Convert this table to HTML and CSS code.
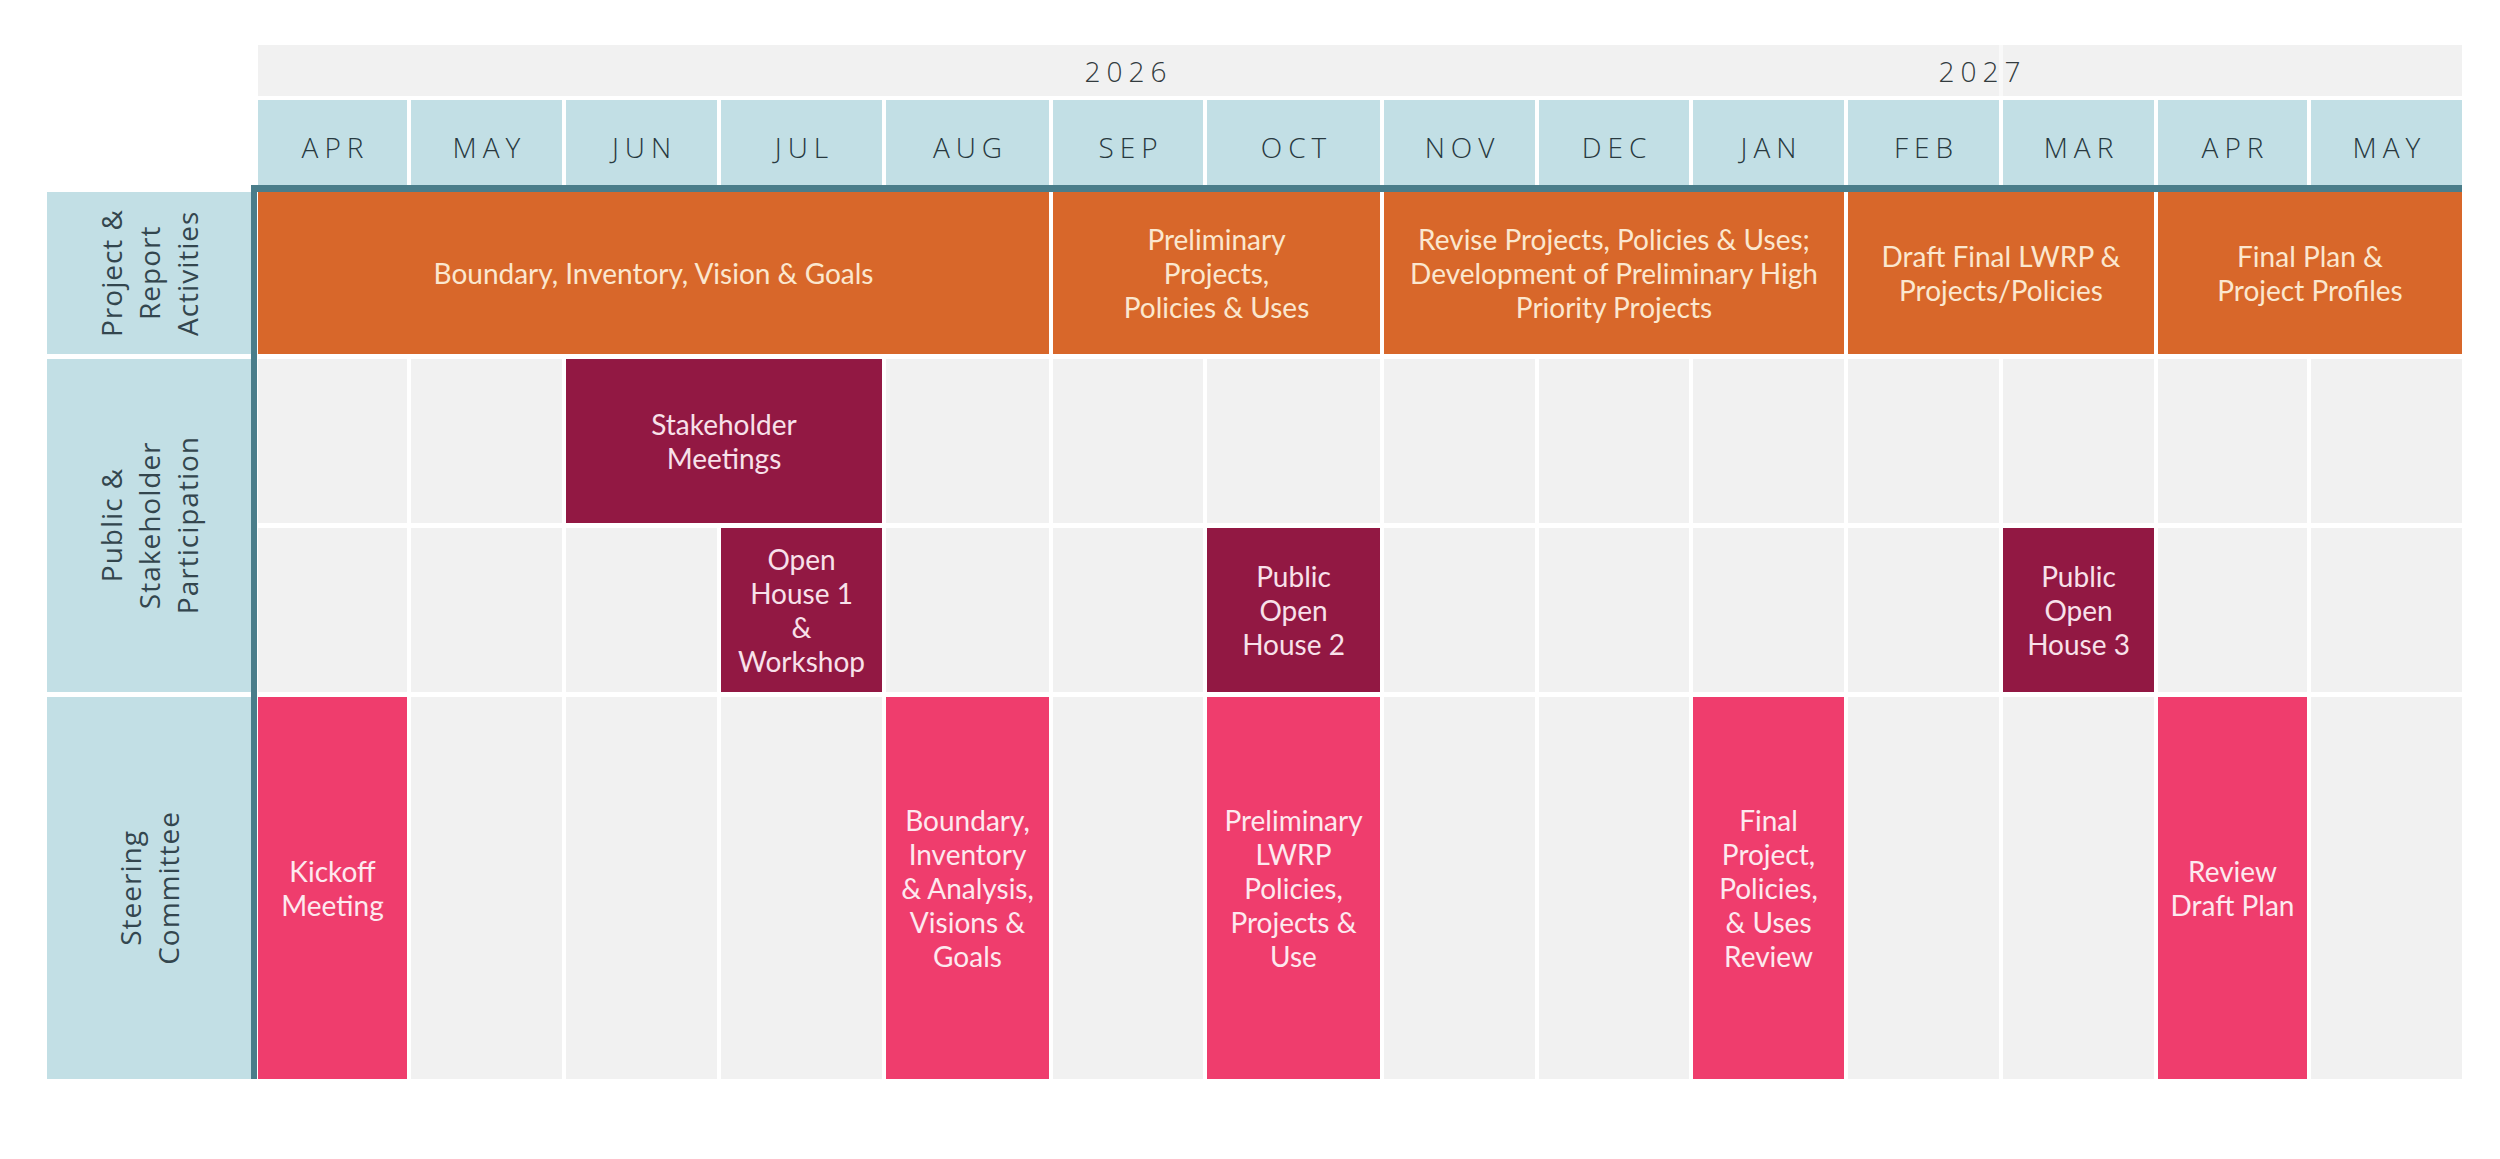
FILE: index.html
```html
<!DOCTYPE html>
<html lang="en">
<head>
<meta charset="utf-8">
<title>LWRP Schedule</title>
<link rel="stylesheet" href="styles.css">
</head>
<body>
<div class="chart">
  <div class="header">
    <div class="years">
      <div class="yseg y1"><span class="year">2026</span></div>
      <div class="yseg y2"></div>
      <div class="ylabel y27"><span class="year">2027</span></div>
    </div>
    <div class="months">
      <div class="month">APR</div>
      <div class="month">MAY</div>
      <div class="month">JUN</div>
      <div class="month">JUL</div>
      <div class="month">AUG</div>
      <div class="month">SEP</div>
      <div class="month">OCT</div>
      <div class="month">NOV</div>
      <div class="month">DEC</div>
      <div class="month">JAN</div>
      <div class="month">FEB</div>
      <div class="month">MAR</div>
      <div class="month">APR</div>
      <div class="month">MAY</div>
    </div>
  </div>
  <div class="body">
    <div class="labels">
      <div class="label l1"><span>Project &amp;<br>Report<br>Activities</span></div>
      <div class="label l2"><span>Public &amp;<br>Stakeholder<br>Participation</span></div>
      <div class="label l3"><span>Steering<br>Committee</span></div>
    </div>
    <div class="timeline">
      <div class="row r1">
        <div class="ev orange c1-6">Boundary, Inventory, Vision &amp; Goals</div>
        <div class="ev orange c6-8">Preliminary<br>Projects,<br>Policies &amp; Uses</div>
        <div class="ev orange c8-11">Revise Projects, Policies &amp; Uses;<br>Development of Preliminary High<br>Priority Projects</div>
        <div class="ev orange c11-13">Draft Final LWRP &amp;<br>Projects/Policies</div>
        <div class="ev orange c13-15">Final Plan &amp;<br>Project Profiles</div>
      </div>
      <div class="row r2">
        <div class="cell"></div>
        <div class="cell"></div>
        <div class="ev maroon c3-5">Stakeholder<br>Meetings</div>
        <div class="cell"></div>
        <div class="cell"></div>
        <div class="cell"></div>
        <div class="cell"></div>
        <div class="cell"></div>
        <div class="cell"></div>
        <div class="cell"></div>
        <div class="cell"></div>
        <div class="cell"></div>
        <div class="cell"></div>
      </div>
      <div class="row r2">
        <div class="cell"></div>
        <div class="cell"></div>
        <div class="cell"></div>
        <div class="ev maroon">Open<br>House 1<br>&amp;<br>Workshop</div>
        <div class="cell"></div>
        <div class="cell"></div>
        <div class="ev maroon">Public<br>Open<br>House 2</div>
        <div class="cell"></div>
        <div class="cell"></div>
        <div class="cell"></div>
        <div class="cell"></div>
        <div class="ev maroon">Public<br>Open<br>House 3</div>
        <div class="cell"></div>
        <div class="cell"></div>
      </div>
      <div class="row r3">
        <div class="ev pink">Kickoff<br>Meeting</div>
        <div class="cell"></div>
        <div class="cell"></div>
        <div class="cell"></div>
        <div class="ev pink">Boundary,<br>Inventory<br>&amp; Analysis,<br>Visions &amp;<br>Goals</div>
        <div class="cell"></div>
        <div class="ev pink">Preliminary<br>LWRP<br>Policies,<br>Projects &amp;<br>Use</div>
        <div class="cell"></div>
        <div class="cell"></div>
        <div class="ev pink">Final<br>Project,<br>Policies,<br>&amp; Uses<br>Review</div>
        <div class="cell"></div>
        <div class="cell"></div>
        <div class="ev pink">Review<br>Draft Plan</div>
        <div class="cell"></div>
      </div>
    </div>
  </div>
</div>
</body>
</html>
```
FILE: styles.css
```css
:root {
  --cols: 149px 151px 151px 161px 163px 150px 173px 151px 150px 151px 151px 151px 149px 151px;
  --blue: #c2dfe5;
  --teal: #4a7d8a;
  --gray: #f1f1f1;
}

* { box-sizing: border-box; }

body {
  margin: 0;
  background: #ffffff;
  font-family: Lato, "Open Sans", sans-serif;
}

.chart {
  padding: 45px 0 0 47px;
  width: 2500px;
  height: 1159px;
}

.header {
  margin-left: 211px;
  width: 2204px;
  display: flex;
  flex-direction: column;
  gap: 4px;
}

.years {
  display: grid;
  grid-template-columns: var(--cols);
  column-gap: 4px;
  height: 51px;
  background: #f9f9f9;
}

.yseg {
  grid-row: 1;
  background: var(--gray);
  display: flex;
  align-items: center;
  justify-content: center;
}

.y1 { grid-column: 1 / 12; }
.y2 { grid-column: 12 / 15; }

.ylabel {
  grid-row: 1;
  z-index: 1;
  display: flex;
  align-items: center;
  justify-content: center;
}

.y27 {
  grid-column: 9 / 15;
  padding-right: 36px;
}

.year {
  font-family: "Open Sans", Lato, sans-serif;
  font-weight: 300;
  font-size: 28px;
  letter-spacing: 6px;
  color: #333b3e;
}

.months {
  display: grid;
  grid-template-columns: var(--cols);
  column-gap: 4px;
  height: 85px;
}

.month {
  background: var(--blue);
  display: flex;
  align-items: center;
  justify-content: center;
  padding: 8px 0 0 6px;
  font-family: "Open Sans", Lato, sans-serif;
  font-weight: 300;
  font-size: 28px;
  letter-spacing: 6px;
  color: #28393f;
}

.body {
  display: flex;
}

.labels {
  width: 204px;
  margin-top: 7px;
  display: flex;
  flex-direction: column;
  gap: 5px;
}

.label {
  background: var(--blue);
  display: flex;
  align-items: center;
  justify-content: center;
}

.l1 { height: 162px; }
.l2 { height: 333px; }
.l3 { height: 382px; }

.label span {
  writing-mode: vertical-rl;
  transform: rotate(180deg);
  text-align: center;
  font-family: "Open Sans", sans-serif;
  font-weight: 400;
  font-size: 28px;
  line-height: 38px;
  letter-spacing: 1px;
  color: #33464e;
}

.timeline {
  width: 2211px;
  border-left: 6px solid var(--teal);
  border-top: 7px solid var(--teal);
  padding-left: 1px;
  display: flex;
  flex-direction: column;
  gap: 5px;
}

.row {
  display: grid;
  grid-template-columns: var(--cols);
  column-gap: 4px;
}

.r1 { height: 162px; }
.r2 { height: 164px; }
.r3 { height: 382px; }

.cell { background: var(--gray); }

.ev {
  display: flex;
  align-items: center;
  justify-content: center;
  text-align: center;
  font-family: Lato, sans-serif;
  font-weight: 400;
  font-size: 28px;
  line-height: 34px;
  white-space: nowrap;
}

.orange { background: #d8672a; color: #fbe7cf; }
.maroon { background: #921843; color: #f8e1ea; }
.pink { background: #ef3d6d; color: #fde9ef; }

.c1-6 { grid-column: 1 / 6; }
.c6-8 { grid-column: 6 / 8; }
.c8-11 { grid-column: 8 / 11; }
.c11-13 { grid-column: 11 / 13; }
.c13-15 { grid-column: 13 / 15; }
.c3-5 { grid-column: 3 / 5; }
```
